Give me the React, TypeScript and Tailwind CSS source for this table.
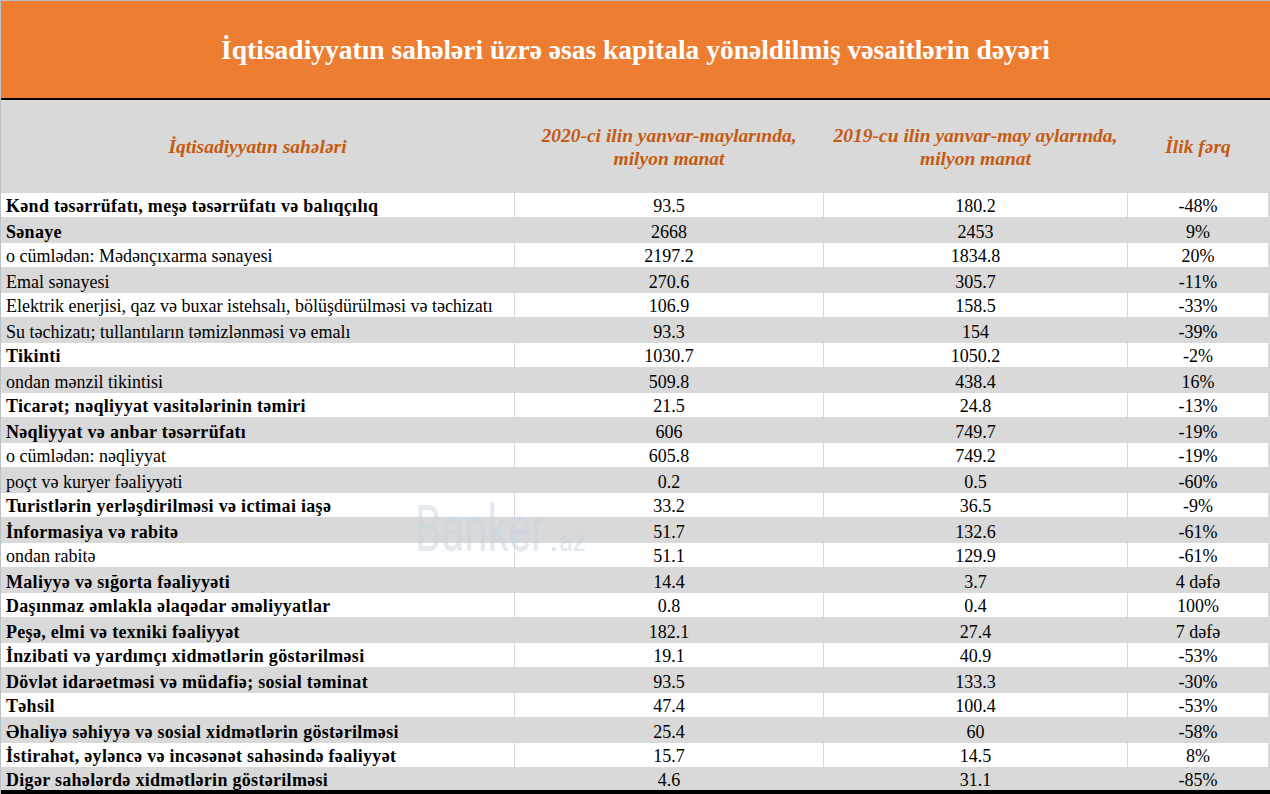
import React from "react"

type Row = {
  name: string
  y2020: string
  y2019: string
  diff: string
  bold?: boolean
}

const rows: Row[] = [
  { name: "Kənd təsərrüfatı, meşə təsərrüfatı və balıqçılıq", y2020: "93.5", y2019: "180.2", diff: "-48%", bold: true },
  { name: "Sənaye", y2020: "2668", y2019: "2453", diff: "9%", bold: true },
  { name: "o cümlədən: Mədənçıxarma sənayesi", y2020: "2197.2", y2019: "1834.8", diff: "20%" },
  { name: "Emal sənayesi", y2020: "270.6", y2019: "305.7", diff: "-11%" },
  { name: "Elektrik enerjisi, qaz və buxar istehsalı, bölüşdürülməsi və təchizatı", y2020: "106.9", y2019: "158.5", diff: "-33%" },
  { name: "Su təchizatı; tullantıların təmizlənməsi və emalı", y2020: "93.3", y2019: "154", diff: "-39%" },
  { name: "Tikinti", y2020: "1030.7", y2019: "1050.2", diff: "-2%", bold: true },
  { name: "ondan mənzil tikintisi", y2020: "509.8", y2019: "438.4", diff: "16%" },
  { name: "Ticarət; nəqliyyat vasitələrinin təmiri", y2020: "21.5", y2019: "24.8", diff: "-13%", bold: true },
  { name: "Nəqliyyat və anbar təsərrüfatı", y2020: "606", y2019: "749.7", diff: "-19%", bold: true },
  { name: "o cümlədən: nəqliyyat", y2020: "605.8", y2019: "749.2", diff: "-19%" },
  { name: "poçt və kuryer fəaliyyəti", y2020: "0.2", y2019: "0.5", diff: "-60%" },
  { name: "Turistlərin yerləşdirilməsi və ictimai iaşə", y2020: "33.2", y2019: "36.5", diff: "-9%", bold: true },
  { name: "İnformasiya və rabitə", y2020: "51.7", y2019: "132.6", diff: "-61%", bold: true },
  { name: "ondan rabitə", y2020: "51.1", y2019: "129.9", diff: "-61%" },
  { name: "Maliyyə və sığorta fəaliyyəti", y2020: "14.4", y2019: "3.7", diff: "4 dəfə", bold: true },
  { name: "Daşınmaz əmlakla əlaqədar əməliyyatlar", y2020: "0.8", y2019: "0.4", diff: "100%", bold: true },
  { name: "Peşə, elmi və texniki fəaliyyət", y2020: "182.1", y2019: "27.4", diff: "7 dəfə", bold: true },
  { name: "İnzibati və yardımçı xidmətlərin göstərilməsi", y2020: "19.1", y2019: "40.9", diff: "-53%", bold: true },
  { name: "Dövlət idarəetməsi və müdafiə; sosial təminat", y2020: "93.5", y2019: "133.3", diff: "-30%", bold: true },
  { name: "Təhsil", y2020: "47.4", y2019: "100.4", diff: "-53%", bold: true },
  { name: "Əhaliyə səhiyyə və sosial xidmətlərin göstərilməsi", y2020: "25.4", y2019: "60", diff: "-58%", bold: true },
  { name: "İstirahət, əyləncə və incəsənət sahəsində fəaliyyət", y2020: "15.7", y2019: "14.5", diff: "8%", bold: true },
  { name: "Digər sahələrdə xidmətlərin göstərilməsi", y2020: "4.6", y2019: "31.1", diff: "-85%", bold: true },
]

const grid = "grid grid-cols-[513px_308px_303px_140px] gap-x-px"

export default function App() {
  return (
    <div className="relative w-[1270px] h-[794px] overflow-hidden bg-[#d9d9d9] border-l border-t border-[#b8c2c8] font-[family-name:'Liberation_Serif','Times_New_Roman',serif] text-black">
      {/* title */}
      <div className="h-[99px] bg-[#ed7d31] border-b-[2px] border-black flex items-center justify-center">
        <h1 className="text-[27.5px] font-bold text-white leading-none">
          İqtisadiyyatın sahələri üzrə əsas kapitala yönəldilmiş vəsaitlərin dəyəri
        </h1>
      </div>

      {/* column headers */}
      <div className={`${grid} h-[93px] items-center text-center text-[19.5px] font-bold italic text-[#c55a11] leading-[23px]`}>
        <div>İqtisadiyyatın sahələri</div>
        <div>
          2020-ci ilin yanvar-maylarında,
          <br />
          milyon manat
        </div>
        <div>
          2019-cu ilin yanvar-may aylarında,
          <br />
          milyon manat
        </div>
        <div>İlik fərq</div>
      </div>

      {/* rows */}
      <div className="text-[18px] leading-none">
        {rows.map((r, i) => {
          const white = i % 2 === 0
          const last = i === rows.length - 1
          return (
            <div key={r.name} className={`${grid} ${last ? "h-[22px]" : "h-[25px]"} ${white ? "pb-px" : ""}`}>
              <div
                className={`flex items-center pl-[5px] pt-[2px] whitespace-nowrap ${white ? "bg-white" : ""} ${
                  r.bold ? "font-bold tracking-[0.3px]" : ""
                }`}
              >
                {r.name}
              </div>
              <div className={`flex items-center justify-center pt-[2px] ${white ? "bg-white" : ""}`}>{r.y2020}</div>
              <div className={`flex items-center justify-center pt-[2px] ${white ? "bg-white" : ""}`}>{r.y2019}</div>
              <div className={`flex items-center justify-center pt-[2px] ${white ? "bg-white" : ""}`}>{r.diff}</div>
            </div>
          )
        })}
        <div className="h-[4px] bg-black" />
      </div>

      {/* watermark */}
      <div className="absolute left-[414px] top-[497px] pointer-events-none flex items-baseline font-[family-name:'Roboto',sans-serif] font-normal opacity-50 text-[#c4d5e4]">
        <span className="text-[64px] leading-none inline-block origin-left scale-x-[0.66] w-[134px]">Banker</span>
        <span className="text-[36px] leading-none text-[#9fcaee]">.</span>
        <span className="text-[30px] leading-none inline-block origin-left scale-x-[0.85]">az</span>
      </div>
    </div>
  )
}
